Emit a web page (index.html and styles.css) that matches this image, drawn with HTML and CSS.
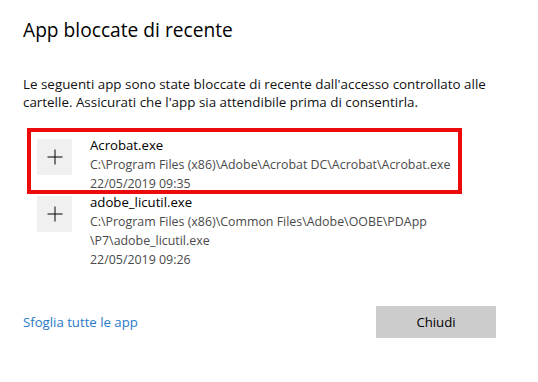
FILE: index.html
```html
<!DOCTYPE html>
<html lang="it">
<head>
<meta charset="utf-8">
<title>App bloccate di recente</title>
<link rel="stylesheet" href="styles.css">
</head>
<body>
<h1 class="title">App bloccate di recente</h1>
<p class="desc">Le seguenti app sono state bloccate di recente dall'accesso controllato alle cartelle. Assicurati che l'app sia attendibile prima di consentirla.</p>
<ul class="list">
  <li class="item">
    <span class="tile"><svg width="16" height="16" viewBox="0 0 16 16"><path d="M8 0.5V15.5M0.5 8H15.5" stroke="#000" stroke-width="1" fill="none"/></svg></span>
    <div class="info">
      <div class="name">Acrobat.exe</div>
      <div class="meta">C:\Program Files (x86)\Adobe\Acrobat DC\Acrobat\Acrobat.exe</div>
      <div class="meta">22/05/2019 09:35</div>
    </div>
    <span class="highlight"></span>
  </li>
  <li class="item">
    <span class="tile"><svg width="16" height="16" viewBox="0 0 16 16"><path d="M8 0.5V15.5M0.5 8H15.5" stroke="#000" stroke-width="1" fill="none"/></svg></span>
    <div class="info">
      <div class="name">adobe_licutil.exe</div>
      <div class="meta">C:\Program Files (x86)\Common Files\Adobe\OOBE\PDApp<br>\P7\adobe_licutil.exe</div>
      <div class="meta">22/05/2019 09:26</div>
    </div>
  </li>
</ul>
<div class="footer">
  <a class="link" href="#">Sfoglia tutte le app</a>
  <button class="btn" type="button">Chiudi</button>
</div>
</body>
</html>
```
FILE: styles.css
```css
* { box-sizing: border-box; }
html, body { background: #fff; }
body {
  margin: 0;
  padding: 16px 42px 0 23px;
  font-family: "Open Sans", "Noto Sans", sans-serif;
  color: #000;
}
.title {
  margin: 0;
  font-size: 19.2px;
  font-weight: 400;
  line-height: 28px;
}
.desc {
  margin: 31px 0 0;
  font-size: 13.4px;
  line-height: 18px;
  color: #111;
}
.list {
  list-style: none;
  margin: 25px 0 0;
  padding: 0;
}
.item {
  position: relative;
  display: flex;
  gap: 18px;
  padding-left: 14px;
}
.tile {
  flex: none;
  width: 35px;
  height: 36px;
  margin-top: 3px;
  background: #f0f0f0;
  display: flex;
  align-items: center;
  justify-content: center;
}
.info { font-size: 12.4px; line-height: 19px; }
.name { font-size: 13.2px; color: #000; }
.meta { color: #4a4a4a; }
.highlight {
  position: absolute;
  top: -8px;
  left: 4px;
  width: 435px;
  height: 66px;
  border: 4px solid #ec0a0a;
  pointer-events: none;
}
.footer {
  margin-top: 37px;
  display: flex;
  justify-content: space-between;
  align-items: center;
}
.link {
  color: #2a7ac8;
  text-decoration: none;
  font-size: 13.2px;
}
.btn {
  width: 120px;
  height: 32px;
  border: none;
  background: #cccccc;
  font-family: inherit;
  font-size: 13.2px;
  color: #000;
  padding: 0;
}
```
